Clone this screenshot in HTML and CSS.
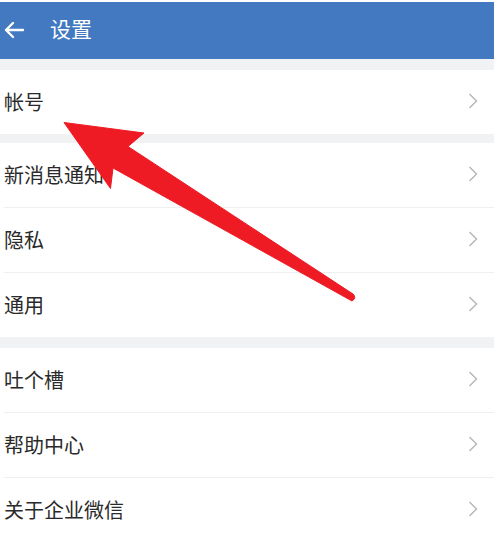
FILE: index.html
```html
<!DOCTYPE html>
<html lang="zh">
<head>
<meta charset="utf-8">
<title>设置</title>
<link rel="stylesheet" href="styles.css">
</head>
<body>
<div class="page">
  <header class="bar">
    <svg class="back" width="22" height="18" viewBox="0 0 22 18"><path d="M20 9 H3 M10 2 L3 9 L10 16" fill="none" stroke="#fff" stroke-width="2.4" stroke-linecap="round" stroke-linejoin="round"/></svg>
    <h1 class="title">设置</h1>
  </header>
  <div class="gap gap-top"></div>
  <section class="group">
    <div class="row"><span class="label">帐号</span><svg class="chev" width="10" height="16" viewBox="0 0 10 16"><path d="M1.5 1 L8.5 8 L1.5 15" fill="none" stroke="#b5b5b5" stroke-width="1.4"/></svg></div>
  </section>
  <div class="gap gap-mid"></div>
  <section class="group">
    <div class="row"><span class="label">新消息通知</span><svg class="chev" width="10" height="16" viewBox="0 0 10 16"><path d="M1.5 1 L8.5 8 L1.5 15" fill="none" stroke="#b5b5b5" stroke-width="1.4"/></svg></div>
    <div class="row"><span class="label">隐私</span><svg class="chev" width="10" height="16" viewBox="0 0 10 16"><path d="M1.5 1 L8.5 8 L1.5 15" fill="none" stroke="#b5b5b5" stroke-width="1.4"/></svg></div>
    <div class="row"><span class="label">通用</span><svg class="chev" width="10" height="16" viewBox="0 0 10 16"><path d="M1.5 1 L8.5 8 L1.5 15" fill="none" stroke="#b5b5b5" stroke-width="1.4"/></svg></div>
  </section>
  <div class="gap gap-low"></div>
  <section class="group">
    <div class="row"><span class="label">吐个槽</span><svg class="chev" width="10" height="16" viewBox="0 0 10 16"><path d="M1.5 1 L8.5 8 L1.5 15" fill="none" stroke="#b5b5b5" stroke-width="1.4"/></svg></div>
    <div class="row"><span class="label">帮助中心</span><svg class="chev" width="10" height="16" viewBox="0 0 10 16"><path d="M1.5 1 L8.5 8 L1.5 15" fill="none" stroke="#b5b5b5" stroke-width="1.4"/></svg></div>
    <div class="row"><span class="label">关于企业微信</span><svg class="chev" width="10" height="16" viewBox="0 0 10 16"><path d="M1.5 1 L8.5 8 L1.5 15" fill="none" stroke="#b5b5b5" stroke-width="1.4"/></svg></div>
  </section>
  <svg class="pointer" width="499" height="539" viewBox="0 0 499 539">
    <path d="M64 122.5 L144 133 L128 146.5 L353 294 Q357 298 352 301 L113 168 L110.5 188.5 Z" fill="#ee1b24" stroke="#ee1b24" stroke-width="1" stroke-linejoin="round"/>
  </svg>
</div>
</body>
</html>
```

FILE: styles.css
```css
* { box-sizing: border-box; }
html, body { margin: 0; padding: 0; background: #fff; }
body {
  font-family: "Noto Sans CJK SC", "Noto Sans", "Liberation Sans", sans-serif;
  color: #2a2a2a;
}
.page {
  position: relative;
  width: 494px;
  height: 539px;
  overflow: hidden;
  padding-top: 2px;
}
.bar {
  height: 57px;
  background: #4279c0;
  display: flex;
  align-items: center;
  padding-left: 3px;
}
.back { display: block; margin-top: -2px; }
.title {
  margin: -4px 0 0 25px;
  font-size: 21px;
  font-weight: 400;
  color: #fff;
  line-height: 1;
}
.gap { background: #f1f2f4; }
.gap-top { height: 11px; }
.gap-mid { height: 9px; }
.gap-low { height: 11px; }
.group { background: #fff; }
.row {
  height: 64px;
  margin-left: 4px;
  padding-right: 16px;
  display: flex;
  align-items: center;
  justify-content: space-between;
}
.row + .row {
  height: 65px;
  border-top: 1px solid #efefef;
}
.label {
  font-size: 20px;
  line-height: 1;
}
.chev { display: block; margin-top: -2px; }
.pointer {
  position: absolute;
  left: 0;
  top: 0;
  pointer-events: none;
}
```
